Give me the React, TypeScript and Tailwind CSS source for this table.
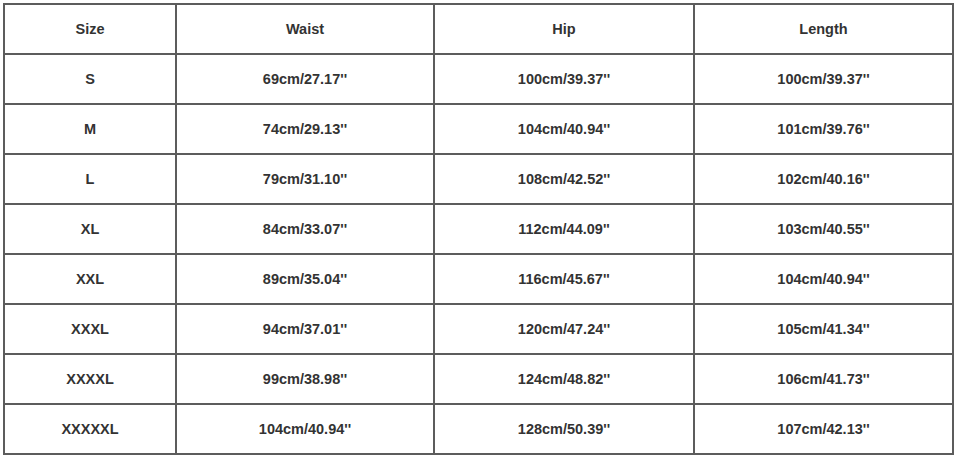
const headers = ["Size", "Waist", "Hip", "Length"];

const rows = [
  ["S", "69cm/27.17''", "100cm/39.37''", "100cm/39.37''"],
  ["M", "74cm/29.13''", "104cm/40.94''", "101cm/39.76''"],
  ["L", "79cm/31.10''", "108cm/42.52''", "102cm/40.16''"],
  ["XL", "84cm/33.07''", "112cm/44.09''", "103cm/40.55''"],
  ["XXL", "89cm/35.04''", "116cm/45.67''", "104cm/40.94''"],
  ["XXXL", "94cm/37.01''", "120cm/47.24''", "105cm/41.34''"],
  ["XXXXL", "99cm/38.98''", "124cm/48.82''", "106cm/41.73''"],
  ["XXXXXL", "104cm/40.94''", "128cm/50.39''", "107cm/42.13''"],
];

export default function App() {
  return (
    <div className="w-[956px] h-[457px] bg-white pt-[3px] pl-[3px] font-['Liberation_Sans',Arial,sans-serif]">
      <table className="table-fixed border-collapse w-[949px] text-[14.5px] font-bold text-[#333]">
        <colgroup>
          <col className="w-[172px]" />
          <col className="w-[258px]" />
          <col className="w-[260px]" />
          <col className="w-[259px]" />
        </colgroup>
        <thead>
          <tr className="h-[50px]">
            {headers.map((h) => (
              <th key={h} className="border-2 border-[#5c5c5c] pt-[2px] text-center align-middle font-bold">
                {h}
              </th>
            ))}
          </tr>
        </thead>
        <tbody>
          {rows.map((row) => (
            <tr key={row[0]} className="h-[50px]">
              {row.map((cell, i) => (
                <td key={i} className="border-2 border-[#5c5c5c] pt-[2px] text-center align-middle">
                  {cell}
                </td>
              ))}
            </tr>
          ))}
        </tbody>
      </table>
    </div>
  );
}
